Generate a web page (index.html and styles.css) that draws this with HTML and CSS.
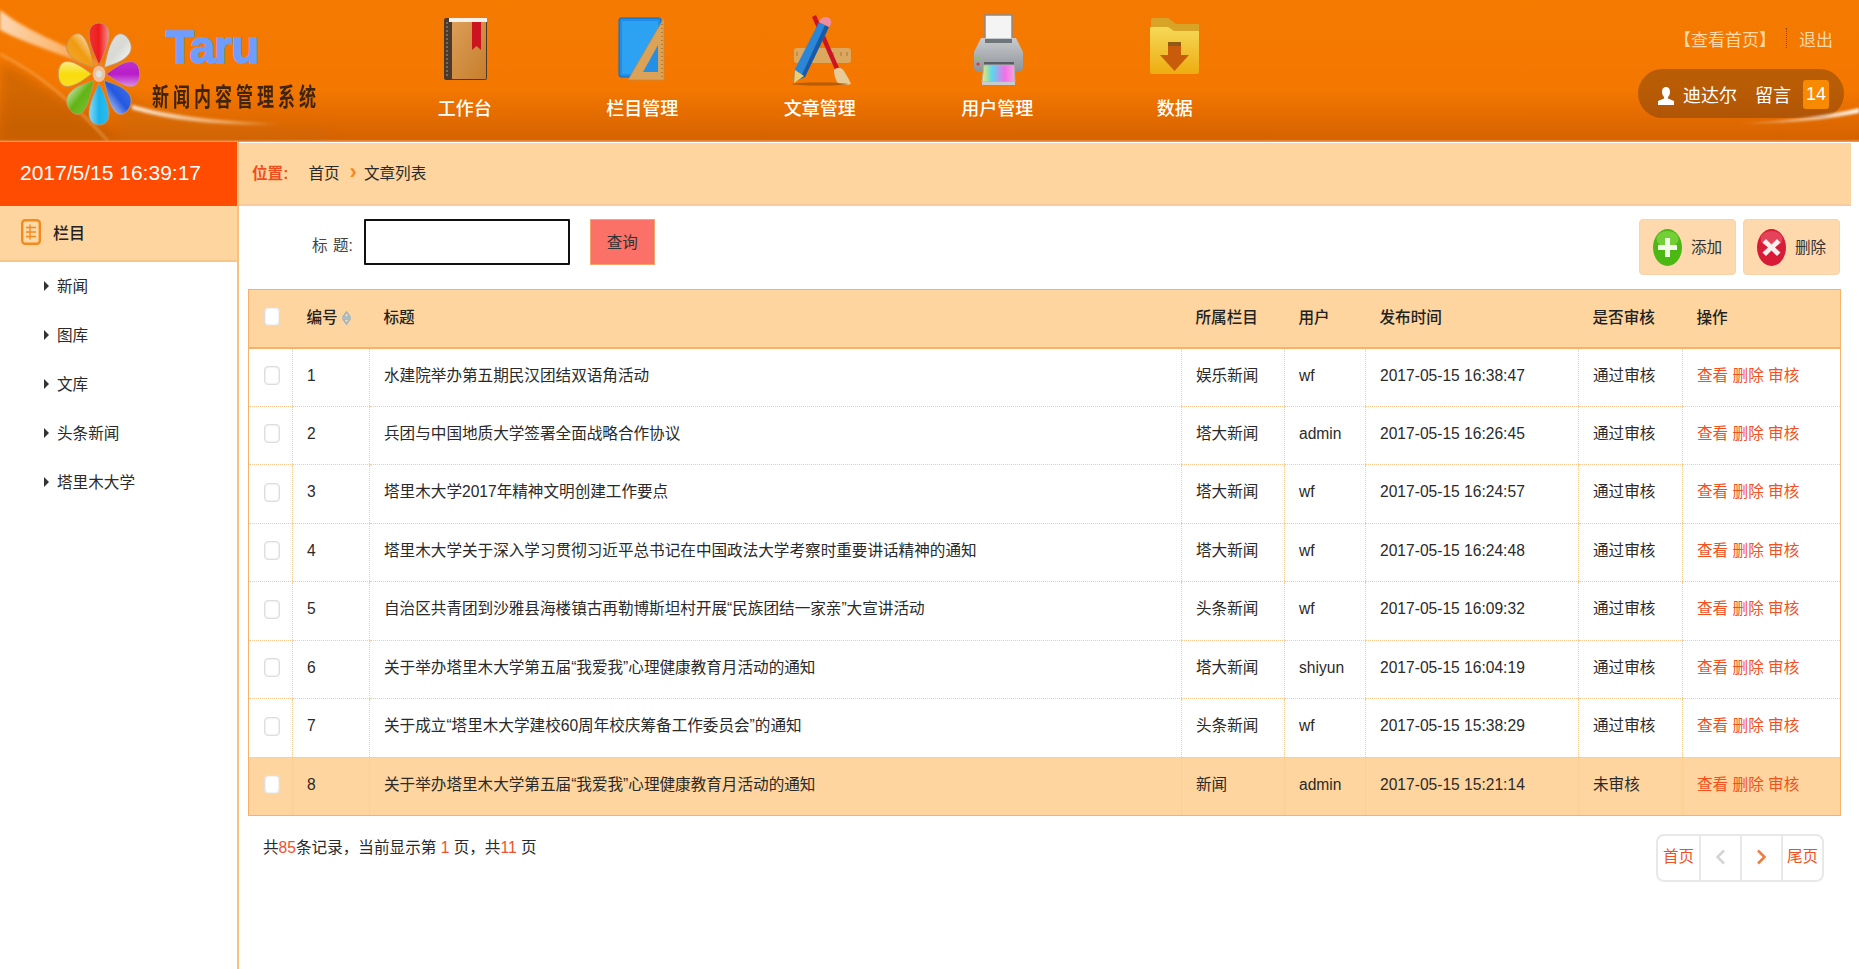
FILE: index.html
```html
<!DOCTYPE html>
<html lang="zh-CN">
<head>
  <meta charset="UTF-8" />
  <title>新闻内容管理系统</title>
  <link rel="stylesheet" href="styles.css">
</head>
<body>
  <header class="top">
    <!-- 背景光带 -->
    <svg class="swoosh" width="360" height="141" viewBox="0 0 360 141">
      <defs>
        <filter id="soft"><feGaussianBlur stdDeviation="1.6"/></filter>
        <filter id="softer"><feGaussianBlur stdDeviation="6"/></filter>
        <linearGradient id="streak" x1="0" x2="1">
          <stop offset="0" stop-color="#fff" stop-opacity=".7"/>
          <stop offset=".5" stop-color="#ffe6c4" stop-opacity=".6"/>
          <stop offset="1" stop-color="#fff" stop-opacity="0"/>
        </linearGradient>
        <linearGradient id="streakLow" x1="0" x2="1">
          <stop offset="0" stop-color="#fff" stop-opacity=".9"/>
          <stop offset=".6" stop-color="#ffe6c4" stop-opacity=".6"/>
          <stop offset="1" stop-color="#fff" stop-opacity="0"/>
        </linearGradient>
      </defs>
      <path d="M0 62C40 78 80 112 122 141H0Z" fill="#b85a06" opacity=".55" filter="url(#softer)"/>
      <path d="M120 90C170 122 240 126 330 128V141H120Z" fill="#c86a10" opacity=".35" filter="url(#softer)"/>
      <path d="M0 10C30 34 70 46 110 68L104 72C70 56 30 46 0 30Z" fill="url(#streak)" filter="url(#soft)"/>
      <path d="M0 54C40 74 70 100 108 141" fill="none" stroke="#ffc27a" stroke-width="1.5" opacity=".7" filter="url(#soft)"/>
      <path d="M132 105C170 116 220 122 290 124C230 126 175 122 132 109Z" fill="url(#streakLow)" filter="url(#soft)"/>
    </svg>
    <svg class="swoosh-right" width="150" height="30" viewBox="0 0 150 30">
      <defs>
        <linearGradient id="streakRight" x1="0" x2="1">
          <stop offset="0" stop-color="#fff" stop-opacity="0"/>
          <stop offset="1" stop-color="#fff" stop-opacity=".9"/>
        </linearGradient>
        <filter id="softRight"><feGaussianBlur stdDeviation=".8"/></filter>
      </defs>
      <path d="M30 24C80 22 120 16 150 9V14C110 22 70 25 30 25Z" fill="url(#streakRight)" filter="url(#softRight)"/>
    </svg>

    <div class="logo">
      <svg class="flower" width="88" height="110" viewBox="0 0 110 110" preserveAspectRatio="none">
        <defs>
          <path id="petal" d="M55 46C50 37 42.500 26 42.500 15C42.500 8 48 4 55 4C62 4 67.500 8 67.500 15C67.500 26 60 37 55 46Z"/>
          <linearGradient id="gloss" x1="0" y1="0" x2="1" y2="0">
            <stop offset="0" stop-color="#fff" stop-opacity=".1"/>
            <stop offset=".5" stop-color="#fff" stop-opacity="0"/>
            <stop offset="1" stop-color="#fff" stop-opacity=".5"/>
          </linearGradient>
        </defs>
        <g stroke="#c8905a" stroke-width=".7">
          <g transform="rotate(315 55 55)"><use href="#petal" fill="#f09a10"/><use href="#petal" fill="url(#gloss)"/></g>
          <g transform="rotate(45 55 55)"><use href="#petal" fill="#d8d8d4"/><use href="#petal" fill="url(#gloss)"/></g>
          <g transform="rotate(135 55 55)"><use href="#petal" fill="#2458e0"/><use href="#petal" fill="url(#gloss)"/></g>
          <g transform="rotate(225 55 55)"><use href="#petal" fill="#62b414"/><use href="#petal" fill="url(#gloss)"/></g>
          <g><use href="#petal" fill="#ee1c1c"/><use href="#petal" fill="url(#gloss)"/></g>
          <g transform="rotate(90 55 55)"><use href="#petal" fill="#b81cc8"/><use href="#petal" fill="url(#gloss)"/></g>
          <g transform="rotate(180 55 55)"><use href="#petal" fill="#18b4ec"/><use href="#petal" fill="url(#gloss)"/></g>
          <g transform="rotate(270 55 55)"><use href="#petal" fill="#f8dc0c"/><use href="#petal" fill="url(#gloss)"/></g>
        </g>
        <circle cx="55" cy="55" r="8" fill="#eec0a0"/>
        <circle cx="55" cy="55" r="3.500" fill="#d8e4dc"/>
      </svg>
      <div class="logo-text">
        <div class="logo-en">Taru</div>
        <div class="logo-cn">新闻内容管理系统</div>
      </div>
    </div>

    <nav class="nav">
      <a class="nav-item">
        <svg width="70" height="72" viewBox="0 0 70 72">
          <defs>
            <linearGradient id="cover" x1="0" x2="1" y1="0" y2="1"><stop offset="0" stop-color="#dc9e58"/><stop offset="1" stop-color="#c67e2c"/></linearGradient>
          </defs>
          <rect x="14" y="4" width="43" height="62" rx="2" fill="#4a3a2e"/>
          <rect x="22" y="8" width="34" height="57" fill="url(#cover)"/>
          <rect x="19" y="4" width="38" height="4" fill="#f4f0ea"/>
          <path d="M17 8V64" stroke="#8a7a66" stroke-width="1.5" stroke-dasharray="2 2"/>
          <path d="M42 8H51V36L46.500 32L42 36Z" fill="#cc1420"/>
        </svg>
        <span>工作台</span>
      </a>
      <a class="nav-item">
        <svg width="70" height="72" viewBox="0 0 70 72">
          <rect x="12" y="4" width="42" height="59" rx="2" fill="#1e8fe8" stroke="#1568b8"/>
          <rect x="15" y="7" width="36" height="53" fill="#2ea2f2"/>
          <path d="M21 66L57 4V66Z" fill="#dca258" stroke="#c68a40" stroke-width=".7"/>
          <path d="M36 58L51 31V58Z" fill="#2290e6"/>
          <path d="M55 10V64" stroke="#b87c34" stroke-dasharray="1 3" stroke-width="2"/>
        </svg>
        <span>栏目管理</span>
      </a>
      <a class="nav-item">
        <svg width="70" height="72" viewBox="0 0 70 72">
          <rect x="9" y="34" width="57" height="15" rx="3" fill="#dca860"/>
          <path d="M12 38V42M20 38V42M28 38V42M48 38V42M56 38V42M62 38V42" stroke="#a87838"/>
          <path d="M27 3L31 1L55 56L51 58Z" fill="#cc1424"/>
          <path d="M49 56C53 52 57 54 59 57C62 62 65 67 66 70C60 72 54 70 52 68C50 64 49 60 49 56Z" fill="#e8cc98"/>
          <path d="M34 8L44 13L20 63L9 68L10 55Z" fill="#2c86d8"/>
          <path d="M40 11L44 13L20 63L15 65Z" fill="#1a5aa4"/>
          <path d="M34 8C36 3 40 2 44 4C47 6 47 10 44 13Z" fill="#ee8ca0"/>
          <path d="M10 56L19 62L9 69Z" fill="#f0cc70"/>
          <ellipse cx="35" cy="70" rx="28" ry="1.500" fill="#8a4a08" opacity=".6"/>
        </svg>
        <span>文章管理</span>
      </a>
      <a class="nav-item">
        <svg width="70" height="72" viewBox="0 0 70 72">
          <defs>
            <linearGradient id="body" x1="0" x2="0" y1="0" y2="1"><stop offset="0" stop-color="#c8ccd0"/><stop offset="1" stop-color="#8e9296"/></linearGradient>
            <linearGradient id="inks" x1="0" x2="1"><stop offset="0" stop-color="#f8e85c"/><stop offset=".3" stop-color="#58d8f0"/><stop offset=".7" stop-color="#f46ee8"/><stop offset="1" stop-color="#f8a8d8"/></linearGradient>
          </defs>
          <rect x="23" y="1" width="27" height="28" fill="#f4f4f4" stroke="#8a8a8a" stroke-width="1.500"/>
          <path d="M19 24H54L61 38V53C61 56 59 58 56 58H17C14 58 12 56 12 53V38Z" fill="url(#body)"/>
          <rect x="23" y="25" width="27" height="4" fill="#70757a"/>
          <circle cx="16" cy="44" r="1.600" fill="#7ed040"/>
          <circle cx="16" cy="50" r="1.600" fill="#d83a30"/>
          <rect x="22" y="48" width="30" height="3" fill="#5a5e62"/>
          <path d="M22 51H52L53 68H20Z" fill="url(#inks)" stroke="#b0b4b8"/>
          <rect x="20" y="68" width="33" height="3" fill="#c8ccd0"/>
        </svg>
        <span>用户管理</span>
      </a>
      <a class="nav-item">
        <svg width="70" height="72" viewBox="0 0 70 72">
          <defs>
            <linearGradient id="folder" x1="0" x2="0" y1="0" y2="1"><stop offset="0" stop-color="#f6d858"/><stop offset="1" stop-color="#eeac10"/></linearGradient>
          </defs>
          <path d="M11 6C11 5 12 4 13 4H28L36 10H58C59 10 59 11 59 12V20H11Z" fill="#d8a428"/>
          <path d="M10 13H28L34 17H59V58C59 59 58 60 57 60H12C11 60 10 59 10 58Z" fill="url(#folder)"/>
          <path d="M28 28H41V41H49L34.500 57L20 41H28Z" fill="#c85c0a"/>
          <rect x="28" y="28" width="13" height="4" fill="#8e5a14"/>
        </svg>
        <span>数据</span>
      </a>
    </nav>

    <div class="account">
      <div class="account-links">
        <a class="home">【查看首页】</a><i class="sep"></i><a class="logout">退出</a>
      </div>
      <div class="account-pill">
        <svg class="user-icon" width="18" height="20" viewBox="0 0 18 20"><path d="M9 1C12 1 13 3.500 13 6C13 8 12 10 11 11V12.500L17 15V19H1V15L7 12.500V11C6 10 5 8 5 6C5 3.500 6 1 9 1Z" fill="#fff"/></svg>
        <span class="user">迪达尔</span>
        <span>留言</span>
        <b class="badge">14</b>
      </div>
    </div>
  </header>

  <div class="page">
    <aside class="side">
      <div class="clock">2017/5/15 16:39:17</div>
      <div class="side-title">
        <svg width="20" height="26" viewBox="0 0 20 26">
          <rect x="1.200" y="1.200" width="17.600" height="23.600" rx="3" fill="#ffd9a8" stroke="#f58a1c" stroke-width="2.400"/>
          <path d="M5 8.500H15M5 13H15M5 17.500H15M9 5.500V20.500" stroke="#f58a1c" stroke-width="1.400"/>
        </svg>
        <span>栏目</span>
      </div>
      <ul class="side-list">
        <li>新闻</li>
        <li>图库</li>
        <li>文库</li>
        <li>头条新闻</li>
        <li>塔里木大学</li>
      </ul>
    </aside>

    <main class="content">
      <div class="crumb">
        <span class="crumb-label">位置:</span>
        <span>首页</span>
        <span class="crumb-arrow">›</span>
        <span>文章列表</span>
      </div>

      <div class="tools">
        <label class="search-label" for="kw">标 题:</label>
        <input class="search-input" id="kw" type="text">
        <button class="search-btn">查询</button>
        <div class="tool-btns">
          <button class="tool-btn">
            <svg width="29" height="37" viewBox="0 0 29 37">
              <ellipse cx="14.500" cy="18.500" rx="14.500" ry="18.500" fill="#4cb814"/>
              <ellipse cx="14.500" cy="10" rx="11" ry="8" fill="#8edc50" opacity=".6"/>
              <path d="M12 9H17V16H24V21H17V28H12V21H5V16H12Z" fill="#f2fbe8"/>
            </svg>
            添加
          </button>
          <button class="tool-btn">
            <svg width="29" height="37" viewBox="0 0 29 37">
              <ellipse cx="14.500" cy="18.500" rx="14.500" ry="18.500" fill="#d81c38"/>
              <ellipse cx="14.500" cy="10" rx="11" ry="8" fill="#f06a7c" opacity=".5"/>
              <path d="M9 10L14.500 15.500L20 10L23.500 13.500L18 18.500L23.500 23.500L20 27L14.500 21.500L9 27L5.500 23.500L11 18.500L5.500 13.500Z" fill="#fbeeee"/>
            </svg>
            删除
          </button>
        </div>
      </div>

      <table class="grid">
        <colgroup>
          <col class="c-check"><col class="c-num"><col class="c-title"><col class="c-cat">
          <col class="c-user"><col class="c-time"><col class="c-audit"><col class="c-ops">
        </colgroup>
        <thead>
          <tr>
            <th class="check"><input type="checkbox"></th>
            <th>编号 <svg class="sort" width="9" height="14" viewBox="0 0 9 14"><path d="M4.500 1L8 6H1ZM4.500 13L1 8H8Z" fill="none" stroke="#9ab4c8" stroke-width="1.500"/></svg></th>
            <th>标题</th><th>所属栏目</th><th>用户</th><th>发布时间</th><th>是否审核</th><th>操作</th>
          </tr>
        </thead>
        <tbody>
          <tr>
            <td class="check"><input type="checkbox"></td><td>1</td><td>水建院举办第五期民汉团结双语角活动</td><td>娱乐新闻</td><td>wf</td><td>2017-05-15 16:38:47</td><td>通过审核</td>
            <td class="ops"><a>查看</a> <a>删除</a> <a>审核</a></td>
          </tr>
          <tr>
            <td class="check"><input type="checkbox"></td><td>2</td><td>兵团与中国地质大学签署全面战略合作协议</td><td>塔大新闻</td><td>admin</td><td>2017-05-15 16:26:45</td><td>通过审核</td>
            <td class="ops"><a>查看</a> <a>删除</a> <a>审核</a></td>
          </tr>
          <tr>
            <td class="check"><input type="checkbox"></td><td>3</td><td>塔里木大学2017年精神文明创建工作要点</td><td>塔大新闻</td><td>wf</td><td>2017-05-15 16:24:57</td><td>通过审核</td>
            <td class="ops"><a>查看</a> <a>删除</a> <a>审核</a></td>
          </tr>
          <tr>
            <td class="check"><input type="checkbox"></td><td>4</td><td>塔里木大学关于深入学习贯彻习近平总书记在中国政法大学考察时重要讲话精神的通知</td><td>塔大新闻</td><td>wf</td><td>2017-05-15 16:24:48</td><td>通过审核</td>
            <td class="ops"><a>查看</a> <a>删除</a> <a>审核</a></td>
          </tr>
          <tr>
            <td class="check"><input type="checkbox"></td><td>5</td><td>自治区共青团到沙雅县海楼镇古再勒博斯坦村开展“民族团结一家亲”大宣讲活动</td><td>头条新闻</td><td>wf</td><td>2017-05-15 16:09:32</td><td>通过审核</td>
            <td class="ops"><a>查看</a> <a>删除</a> <a>审核</a></td>
          </tr>
          <tr>
            <td class="check"><input type="checkbox"></td><td>6</td><td>关于举办塔里木大学第五届“我爱我”心理健康教育月活动的通知</td><td>塔大新闻</td><td>shiyun</td><td>2017-05-15 16:04:19</td><td>通过审核</td>
            <td class="ops"><a>查看</a> <a>删除</a> <a>审核</a></td>
          </tr>
          <tr>
            <td class="check"><input type="checkbox"></td><td>7</td><td>关于成立“塔里木大学建校60周年校庆筹备工作委员会”的通知</td><td>头条新闻</td><td>wf</td><td>2017-05-15 15:38:29</td><td>通过审核</td>
            <td class="ops"><a>查看</a> <a>删除</a> <a>审核</a></td>
          </tr>
          <tr class="on">
            <td class="check"><input type="checkbox"></td><td>8</td><td>关于举办塔里木大学第五届“我爱我”心理健康教育月活动的通知</td><td>新闻</td><td>admin</td><td>2017-05-15 15:21:14</td><td>未审核</td>
            <td class="ops"><a>查看</a> <a>删除</a> <a>审核</a></td>
          </tr>
        </tbody>
      </table>

      <div class="pager-row">
        <div class="pager-info">共<em>85</em>条记录，当前显示第 <em>1</em> 页，共<em>11</em> 页</div>
        <div class="pager">
          <a>首页</a>
          <a class="arrow off"><svg width="11" height="16" viewBox="0 0 11 16"><path d="M9 1.500L2.500 8L9 14.500" fill="none" stroke="#d4d4d4" stroke-width="2.500"/></svg></a>
          <a class="arrow"><svg width="11" height="16" viewBox="0 0 11 16"><path d="M2 1.500L8.500 8L2 14.500" fill="none" stroke="#f47a3c" stroke-width="2.500"/></svg></a>
          <a>尾页</a>
        </div>
      </div>
    </main>
  </div>
</body>
</html>
```

FILE: styles.css
```css
* {
  box-sizing: border-box;
}
html, body {
  height: 100%;
}
body {
  margin: 0;
  font-family: "Liberation Sans", "Noto Sans CJK SC", sans-serif;
  font-size: 15.6px;
  color: #2a2a2a;
  background: #fff;
  overflow: hidden;
}
a {
  cursor: pointer;
}

/* 顶部 */
.top {
  position: relative;
  display: flex;
  height: 142px;
  overflow: hidden;
  background: linear-gradient(#f57a00 0, #f47800 62%, #d66200 98%, #e9a468 100%);
}
.swoosh {
  position: absolute;
  left: 0;
  top: 0;
}
.swoosh-right {
  position: absolute;
  right: 0;
  bottom: 13px;
  z-index: 2;
}
.logo {
  position: relative;
  flex: none;
  display: flex;
  align-items: flex-start;
  width: 376px;
  padding: 19px 0 0 55px;
}
.flower {
  flex: none;
}
.logo-text {
  margin-left: 9px;
}
.logo-en {
  margin: 3px 0 0 14px;
  font-size: 46px;
  line-height: 50px;
  font-weight: bold;
  letter-spacing: -1px;
  color: #6f9dff;
  -webkit-text-stroke: 1.500px #6f9dff;
}
.logo-cn {
  margin-top: 13px;
  width: 168px;
  font-size: 17px;
  line-height: 28px;
  font-weight: bold;
  letter-spacing: 4px;
  color: #40240e;
  white-space: nowrap;
  transform: scaleY(1.45);
}
.nav {
  position: relative;
  display: flex;
  padding-top: 14px;
}
.nav-item {
  width: 177.500px;
  text-align: center;
  color: #fff;
  font-size: 18px;
  font-weight: 500;
  line-height: 46px;
}
.nav-item svg {
  display: block;
  margin: 0 auto;
}
.account {
  position: relative;
  margin-left: auto;
  padding: 26px 15px 0 0;
}
.account-links {
  display: flex;
  justify-content: flex-end;
  align-items: center;
  padding-right: 11px;
  height: 24px;
  font-size: 18px;
  color: #ffd8a8;
}
.home {
  font-size: 17px;
  margin-right: -1px;
}
.logout {
  font-size: 17px;
}
.sep {
  width: 0;
  height: 20px;
  margin: 0 12px 0 11px;
  border-left: 1px dotted #7a4a10;
}
.account-pill {
  display: flex;
  align-items: center;
  width: 206px;
  height: 49px;
  margin-top: 19px;
  padding-left: 19px;
  border-radius: 25px;
  background: rgba(125, 64, 12, .5);
  color: #fff;
  font-size: 18px;
}
.user-icon {
  margin-top: 5px;
}
.user {
  margin: 0 18px 0 8px;
}
.badge {
  margin: 1px 0 0 12px;
  width: 26px;
  height: 29px;
  line-height: 29px;
  text-align: center;
  border-radius: 3px;
  background: #f78a00;
  font-weight: normal;
}

/* 主体 */
.page {
  display: flex;
  height: calc(100% - 142px);
}
.side {
  flex: none;
  width: 239px;
  border-right: 2px solid #f9bf7d;
}
.clock {
  height: 64px;
  line-height: 62px;
  padding-left: 20px;
  background: #ff4c00;
  color: #fff;
  font-size: 21px;
}
.side-title {
  display: flex;
  align-items: center;
  gap: 12px;
  height: 56px;
  padding: 0 0 2px 21px;
  background: #fed59e;
  border-bottom: 2px solid #f9c68a;
  color: #222;
  font-weight: 500;
  font-size: 16px;
}
.side-list {
  list-style: none;
  margin: 0;
  padding: 0;
}
.side-list li {
  position: relative;
  height: 49px;
  line-height: 49px;
  padding-left: 57px;
}
.side-list li::before {
  content: "";
  position: absolute;
  left: 44px;
  top: 19px;
  border-left: 5px solid #333;
  border-top: 5px solid transparent;
  border-bottom: 5px solid transparent;
}
.content {
  flex: 1;
  min-width: 0;
}
.crumb {
  display: flex;
  align-items: center;
  height: 63px;
  margin: 1px 8px 0 0;
  padding: 0 0 4px 13px;
  background: #fed59e;
  border-bottom: 2px solid #f9c9a0;
}
.crumb-label {
  margin-right: 20px;
  color: #ef4f1c;
  font-weight: bold;
}
.crumb-arrow {
  margin: 0 7px 0 10px;
  color: #f58a1c;
  font-size: 22px;
  font-weight: bold;
  line-height: 1;
}
.tools {
  display: flex;
  align-items: flex-start;
  height: 83px;
  padding: 13px 19px 0 73px;
}
.search-label {
  margin: 14px 11px 0 0;
  color: #444;
  word-spacing: 1px;
}
.search-input {
  width: 206px;
  height: 46px;
  border: 2px solid #111;
  border-radius: 1px;
  outline: none;
}
.search-btn {
  width: 65px;
  height: 46px;
  margin-left: 20px;
  padding: 0 0 3px;
  background: #fb7168;
  border: 1px solid #f5a46a;
  color: #333;
  font: inherit;
}
.tool-btns {
  display: flex;
  gap: 7px;
  margin-left: auto;
}
.tool-btn {
  display: flex;
  align-items: center;
  gap: 9px;
  width: 97px;
  height: 56px;
  padding: 0 0 3px 13px;
  background: #fed9ad;
  border: 1px solid #f8d2a8;
  border-radius: 4px;
  color: #333;
  font: inherit;
}
.tool-btn svg {
  flex: none;
  margin-top: 3px;
}

/* 列表 */
.grid {
  width: 1592px;
  margin-left: 9px;
  table-layout: fixed;
  border-collapse: collapse;
  border: 1px solid #f6b26b;
}
.c-check { width: 44px; }
.c-num { width: 77px; }
.c-title { width: 812px; }
.c-cat { width: 103px; }
.c-user { width: 81px; }
.c-time { width: 213px; }
.c-audit { width: 104px; }
.c-ops { width: 158px; }
.grid th, .grid td {
  height: 58.500px;
  padding: 0 0 3px 14px;
  line-height: 20px;
  text-align: left;
  white-space: nowrap;
}
.grid th {
  height: 58px;
  padding-bottom: 1px;
  background: #fed59e;
  border-bottom: 2px solid #f6b26b;
  font-weight: 500;
  color: #222;
}
.grid td {
  border-bottom: 1px dotted #f9c98f;
  border-left: 1px dotted #f9c98f;
}
.grid td:first-child {
  border-left: 0;
}
.grid .check {
  padding: 0 0 3px 15px;
}
.grid input {
  appearance: none;
  display: block;
  width: 16px;
  height: 19px;
  margin: 0;
  background: #fff;
  border: 1px solid #ddd;
  border-radius: 4px;
  box-shadow: inset 0 0 2px #ccc;
}
.sort {
  vertical-align: -2px;
}
.grid .on td {
  background: #fed59e;
}
.ops a {
  color: #f2501f;
}

/* 分页 */
.pager-row {
  display: flex;
  justify-content: space-between;
  align-items: flex-start;
  padding: 18px 35px 0 24px;
}
.pager-info {
  margin-top: 1px;
}
.pager-info em {
  font-style: normal;
  color: #f4502a;
}
.pager {
  display: flex;
  height: 48px;
  border: 2px solid #e8e8e8;
  border-radius: 8px;
}
.pager a {
  width: 41px;
  line-height: 42px;
  text-align: center;
  color: #f2501f;
  border-left: 2px solid #e8e8e8;
}
.pager a:first-child {
  border-left: 0;
}
.pager .arrow {
  display: flex;
  align-items: center;
  justify-content: center;
  padding-bottom: 2px;
}
```
